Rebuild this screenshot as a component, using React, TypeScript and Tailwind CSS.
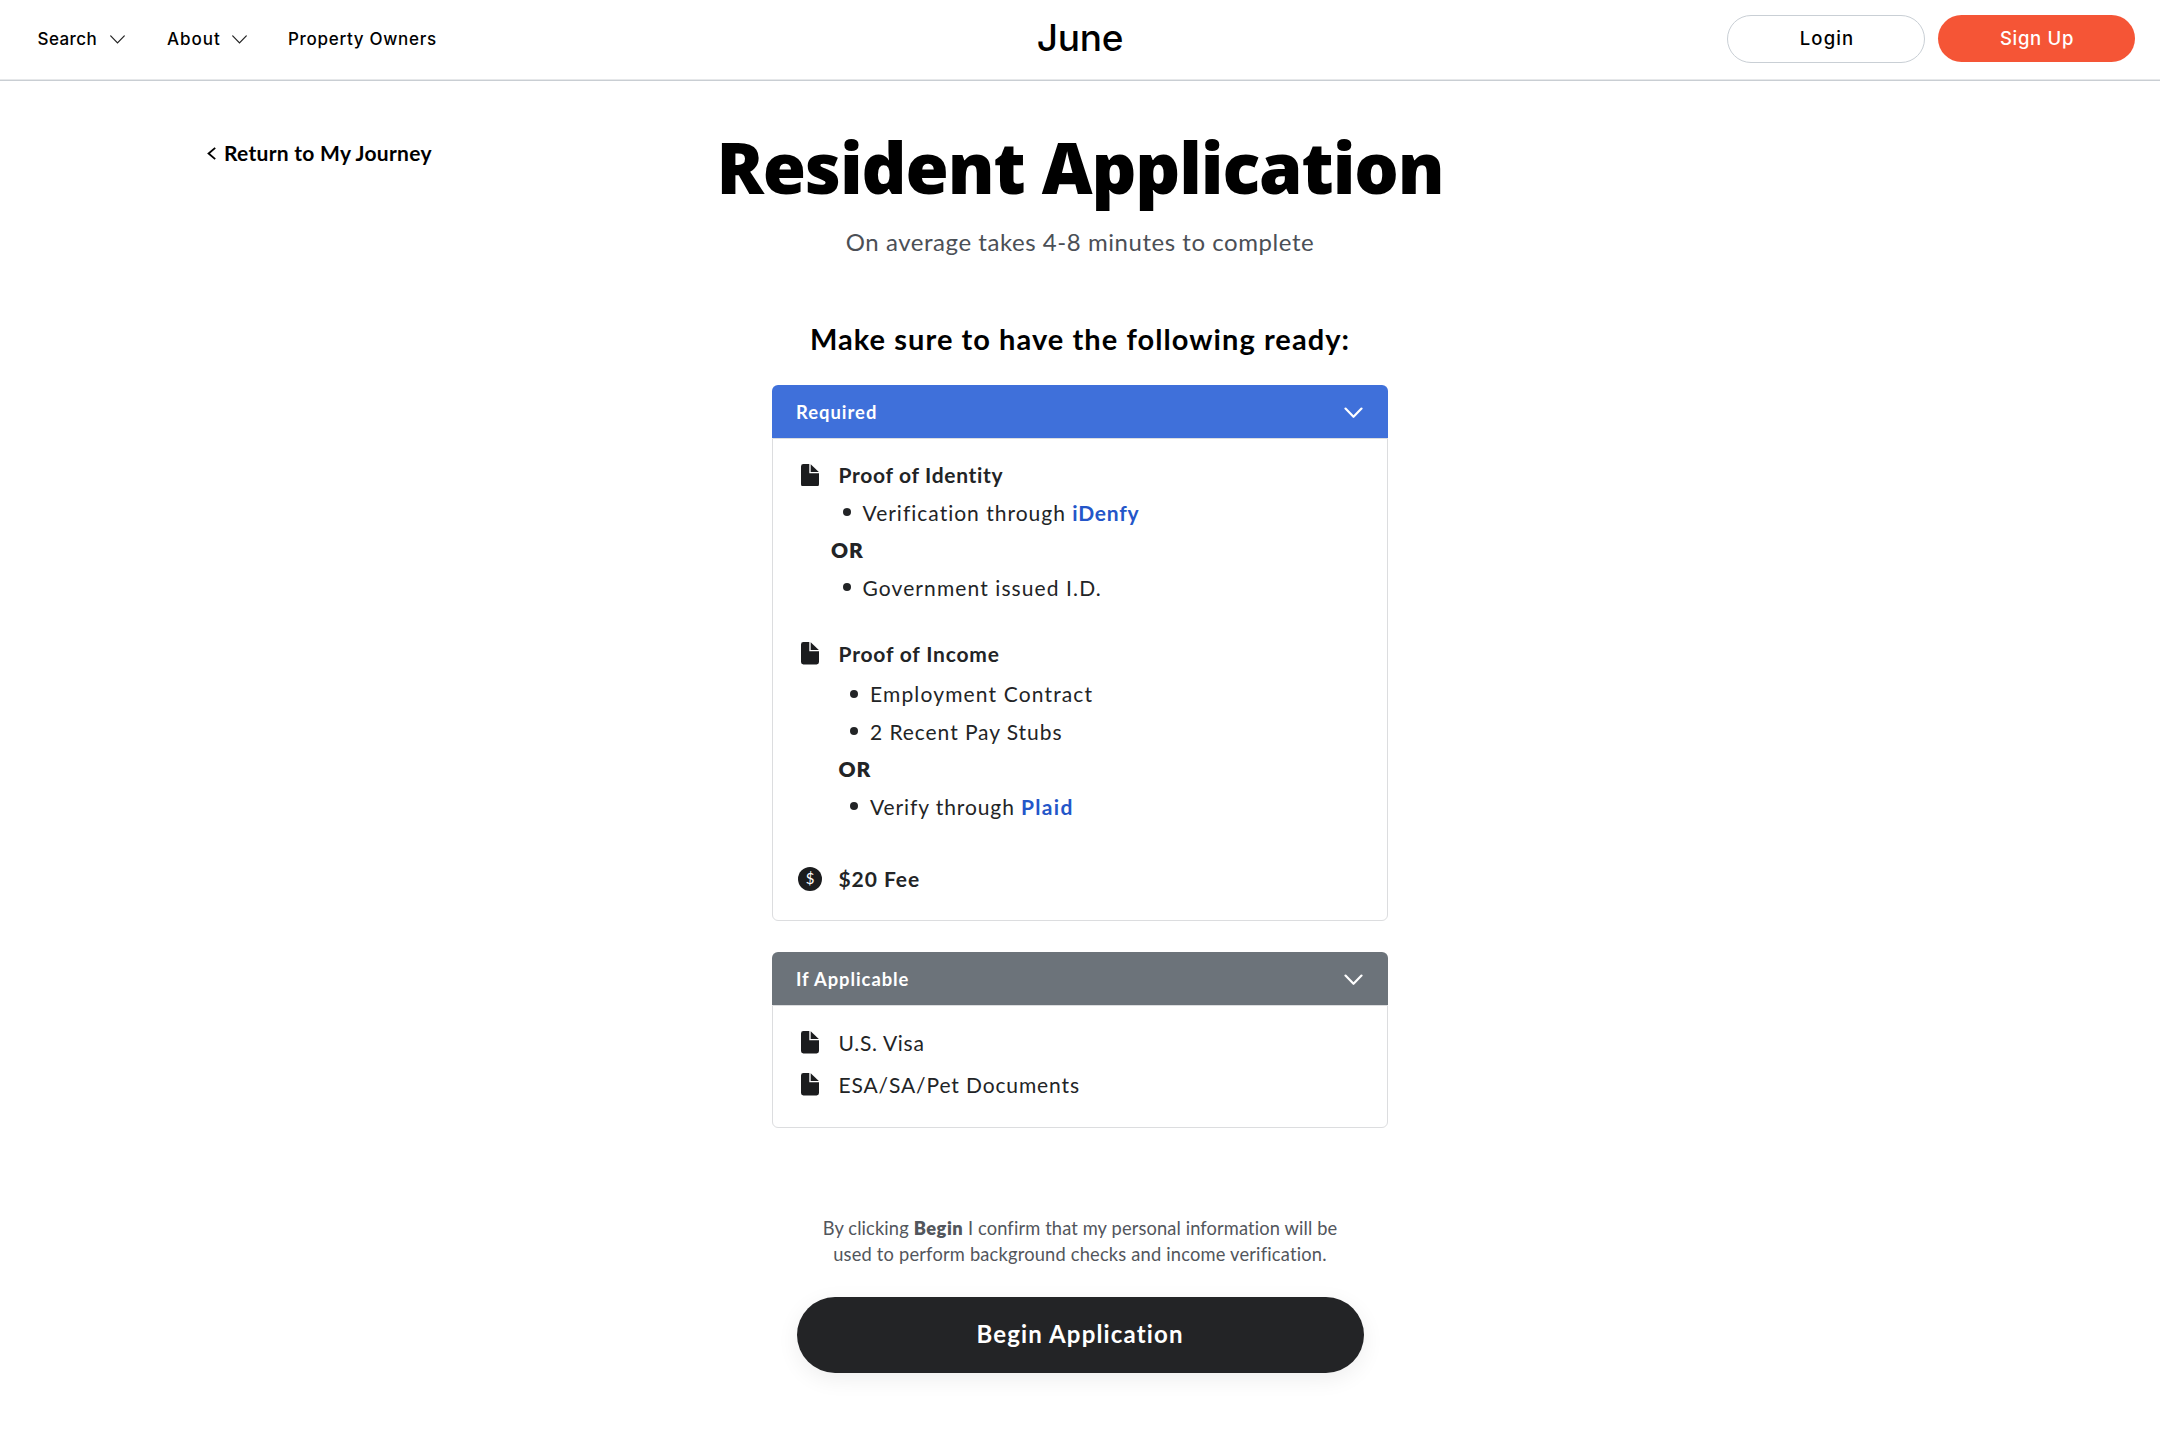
import type { ReactNode } from 'react';

function NavChevron() {
  return (
    <svg width="15" height="9" viewBox="0 0 15 9" fill="none" stroke="#222" strokeWidth="1.2" strokeLinecap="round">
      <path d="M0.7 0.9 7.5 7.9 14.3 0.9" />
    </svg>
  );
}

function FileIcon() {
  return (
    <span className="flex w-6 shrink-0 justify-center">
      <svg width="18" height="22.5" viewBox="0 0 18 22.5" fill="#1b1c1e">
        <path d="M2.4 0H8.3V9.3H18V20.1A2.4 2.4 0 0 1 15.6 22.5H2.4A2.4 2.4 0 0 1 0 20.1V2.4A2.4 2.4 0 0 1 2.4 0Z" />
        <path d="M9.7 0.2 17.8 7.9H9.7Z" />
      </svg>
    </span>
  );
}

function CardHeader({ children }: { children: ReactNode }) {
  return (
    <>
      <span>{children}</span>
      <svg width="19" height="12" viewBox="0 0 19 12" fill="none" stroke="#fff" strokeWidth="2.2" strokeLinecap="round" strokeLinejoin="round">
        <path d="M1.5 1.6 9.5 9.8 17.5 1.6" />
      </svg>
    </>
  );
}

function Bullet({ children }: { children: ReactNode }) {
  return (
    <li className="flex h-[37.5px] items-center gap-3">
      <span className="size-2 shrink-0 rounded-full bg-[#222426]" />
      <span>{children}</span>
    </li>
  );
}

export default function App() {
  return (
    <div className="min-h-[1435px] w-[2160px] bg-white font-['Lato',sans-serif] text-black">
      <header className="grid h-[81px] grid-cols-3 border-b border-[#c9ced3] pb-[3px] font-['Inter',sans-serif] font-medium shadow-[inset_0_-1px_0_#e6e8ea]">
        <nav className="flex items-center pt-[2px] pl-[37.5px] text-[17px] whitespace-nowrap">
          <span className="w-[72.5px] tracking-[0.43px]">Search</span>
          <NavChevron />
          <span className="ml-[42px] w-[65px] tracking-[0.98px]">About</span>
          <NavChevron />
          <span className="ml-[41px] tracking-[0.7px]">Property Owners</span>
        </nav>
        <div className="flex items-center justify-center pb-[2px] text-[37px] leading-none tracking-[-0.3px]">June</div>
        <div className="flex items-center justify-end gap-[13px] pr-[25px] text-[18.5px]">
          <button className="h-12 w-[198px] rounded-full border border-[#c9cfd5] pl-[2px] tracking-[1.1px]">Login</button>
          <button className="h-[47px] w-[197px] rounded-full bg-[#f55536] pl-px tracking-[0.7px] text-white">Sign Up</button>
        </div>
      </header>

      <main className="grid grid-cols-3">
        <div className="flex h-[86px] items-end pl-[207px]">
          <a className="flex items-center gap-2 text-[21px] leading-7 font-bold tracking-[0.28px] whitespace-nowrap">
            <svg width="9" height="13" viewBox="0 0 9 13" fill="none" stroke="#000" strokeWidth="1.9">
              <path d="M8.2 0.9 1.6 6.5 8.2 12.1" />
            </svg>
            Return to My Journey
          </a>
        </div>

        <section className="flex flex-col items-center pt-11 text-center whitespace-nowrap">
          <h1 className="font-['Open_Sans',sans-serif] text-[70px] leading-[84px] font-extrabold tracking-[-1.1px]">Resident Application</h1>
          <p className="mt-[15px] text-[24px] leading-9 tracking-[0.55px] text-[#4b4f56]">On average takes 4-8 minutes to complete</p>
          <h2 className="mt-[59px] text-[29px] leading-10 font-bold tracking-[1.06px]">Make sure to have the following ready:</h2>

          <div className="mt-[26px] w-[616px] text-left text-[21px] text-[#222426]">
            <div className="flex h-[53px] items-center justify-between rounded-t-md bg-[#3f70da] pt-[2px] pr-[25px] pl-6 text-[18.4px] font-bold tracking-[1px] text-white">
              <CardHeader>Required</CardHeader>
            </div>
            <div className="h-[483px] rounded-b-md border border-[#dcdddf] pt-[17px] pl-[25px]">
              <div className="flex h-[37.5px] items-center gap-[16.5px] font-bold tracking-[0.68px]">
                <FileIcon />
                Proof of Identity
              </div>
              <ul className="pl-[44.5px] tracking-[1px]">
                <Bullet>Verification through <b className="tracking-[0.75px] text-[#2456c9]">iDenfy</b></Bullet>
              </ul>
              <p className="pl-[33px] leading-[37.5px] font-extrabold tracking-[0.8px]">OR</p>
              <ul className="pl-[44.5px] tracking-[1.1px]">
                <Bullet>Government issued I.D.</Bullet>
              </ul>

              <div className="mt-[28.5px] flex h-[37.5px] items-center gap-[16.5px] font-bold tracking-[0.8px]">
                <FileIcon />
                Proof of Income
              </div>
              <ul className="mt-[3px] pl-[52px] tracking-[1.15px]">
                <Bullet>Employment Contract</Bullet>
                <Bullet><span className="tracking-[0.93px]">2 Recent Pay Stubs</span></Bullet>
              </ul>
              <p className="pl-[40.5px] leading-[37.5px] font-extrabold tracking-[0.8px]">OR</p>
              <ul className="pl-[52px] tracking-[0.9px]">
                <Bullet>Verify through <b className="tracking-[1.3px] text-[#2456c9]">Plaid</b></Bullet>
              </ul>

              <div className="mt-[35px] flex h-[37.5px] items-center gap-[16.5px] font-bold tracking-[0.94px]">
                <span className="flex size-6 shrink-0 items-center justify-center rounded-full bg-[#1b1c1e] text-[15px] leading-none font-normal tracking-normal text-white">$</span>
                $20 Fee
              </div>
            </div>
          </div>

          <div className="mt-[31px] w-[616px] text-left text-[21px] text-[#222426]">
            <div className="flex h-[53px] items-center justify-between rounded-t-md bg-[#6c737a] pt-[2px] pr-[25px] pl-6 text-[18.4px] font-bold tracking-[0.93px] text-white">
              <CardHeader>If Applicable</CardHeader>
            </div>
            <div className="h-[123px] rounded-b-md border border-[#dcdddf] pt-[15.5px] pl-[25px]">
              <div className="flex h-[42px] items-center gap-[16.5px] tracking-[0.7px]">
                <FileIcon />
                U.S. Visa
              </div>
              <div className="flex h-[42px] items-center gap-[16.5px] tracking-[0.88px]">
                <FileIcon />
                ESA/SA/Pet Documents
              </div>
            </div>
          </div>

          <p className="mt-[88px] text-[18.3px] leading-[25.5px] tracking-[0.12px] text-[#52565c]">
            By clicking <b className="font-extrabold tracking-[0.5px]">Begin</b> I confirm that my personal information will be
            <br />
            <span className="tracking-[0.19px]">used to perform background checks and income verification.</span>
          </p>
          <button className="mt-[30px] h-[75.5px] w-[567px] rounded-full bg-[#232426] pb-px text-[24px] font-bold tracking-[1.15px] text-white shadow-[0_6px_22px_rgba(0,0,0,0.07)]">Begin Application</button>
        </section>
      </main>
    </div>
  );
}
